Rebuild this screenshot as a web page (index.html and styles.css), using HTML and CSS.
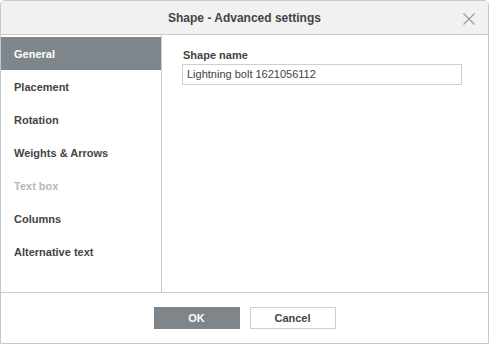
FILE: index.html
```html
<!DOCTYPE html>
<html>
<head>
<meta charset="utf-8">
<link rel="stylesheet" href="styles.css">
</head>
<body>
<div class="dialog">
  <div class="header">
    <span class="title">Shape - Advanced settings</span>
    <svg class="close" width="12" height="12" viewBox="0 0 12 12"><path d="M0.5 0.5 L11.5 11.5 M11.5 0.5 L0.5 11.5" stroke="#9a9a9a" stroke-width="1.2" fill="none"/></svg>
  </div>
  <div class="body">
    <div class="sidebar">
      <div class="item active">General</div>
      <div class="item">Placement</div>
      <div class="item">Rotation</div>
      <div class="item">Weights &amp; Arrows</div>
      <div class="item disabled">Text box</div>
      <div class="item">Columns</div>
      <div class="item">Alternative text</div>
    </div>
    <div class="content">
      <div class="label">Shape name</div>
      <div class="input">Lightning bolt 1621056112</div>
    </div>
  </div>
  <div class="footer">
    <div class="btn primary">OK</div>
    <div class="btn">Cancel</div>
  </div>
</div>
</body>
</html>
```
FILE: styles.css
```css
html, body { margin: 0; padding: 0; background: #fff; }
body { font-family: "Liberation Sans", Arial, sans-serif; font-size: 11px; color: #444; }
.dialog {
  width: 489px; height: 344px; box-sizing: border-box;
  border: 1px solid #c8c8c8; border-radius: 5px 5px 0 0;
  display: flex; flex-direction: column; overflow: hidden;
}
.header {
  height: 33px; flex: none; background: #f1f1f1; border-bottom: 1px solid #cbcbcb;
  display: flex; align-items: center; justify-content: center; position: relative;
}
.title { font-weight: bold; font-size: 12px; color: #444; }
.close { position: absolute; right: 13px; top: 12px; }
.body { flex: 1; display: flex; border-bottom: 1px solid #cbcbcb; }
.sidebar { width: 160px; flex: none; border-right: 1px solid #cbcbcb; padding-top: 2px; }
.item { height: 33px; line-height: 35px; padding-left: 13px; font-weight: bold; color: #444; }
.item.active { background: #7e858b; color: #fff; }
.item.disabled { color: #b8b8b8; }
.content { flex: 1; padding: 13px 0 0 21px; }
.label { font-weight: bold; line-height: 14px; margin-bottom: 2px; }
.input {
  width: 274px; height: 19px; border: 1px solid #cfcfcf; line-height: 19px;
  padding-left: 4px; box-sizing: content-box; margin-left: -1px;
}
.footer { height: 50px; flex: none; display: flex; justify-content: center; gap: 10px; padding-top: 14px; box-sizing: border-box; }
.btn {
  width: 84px; height: 20px; border: 1px solid #cfcfcf; text-align: center; line-height: 20px;
  font-weight: bold; color: #444; background: #fff;
}
.btn.primary { background: #7e858b; border-color: #7e858b; color: #fff; }
```
